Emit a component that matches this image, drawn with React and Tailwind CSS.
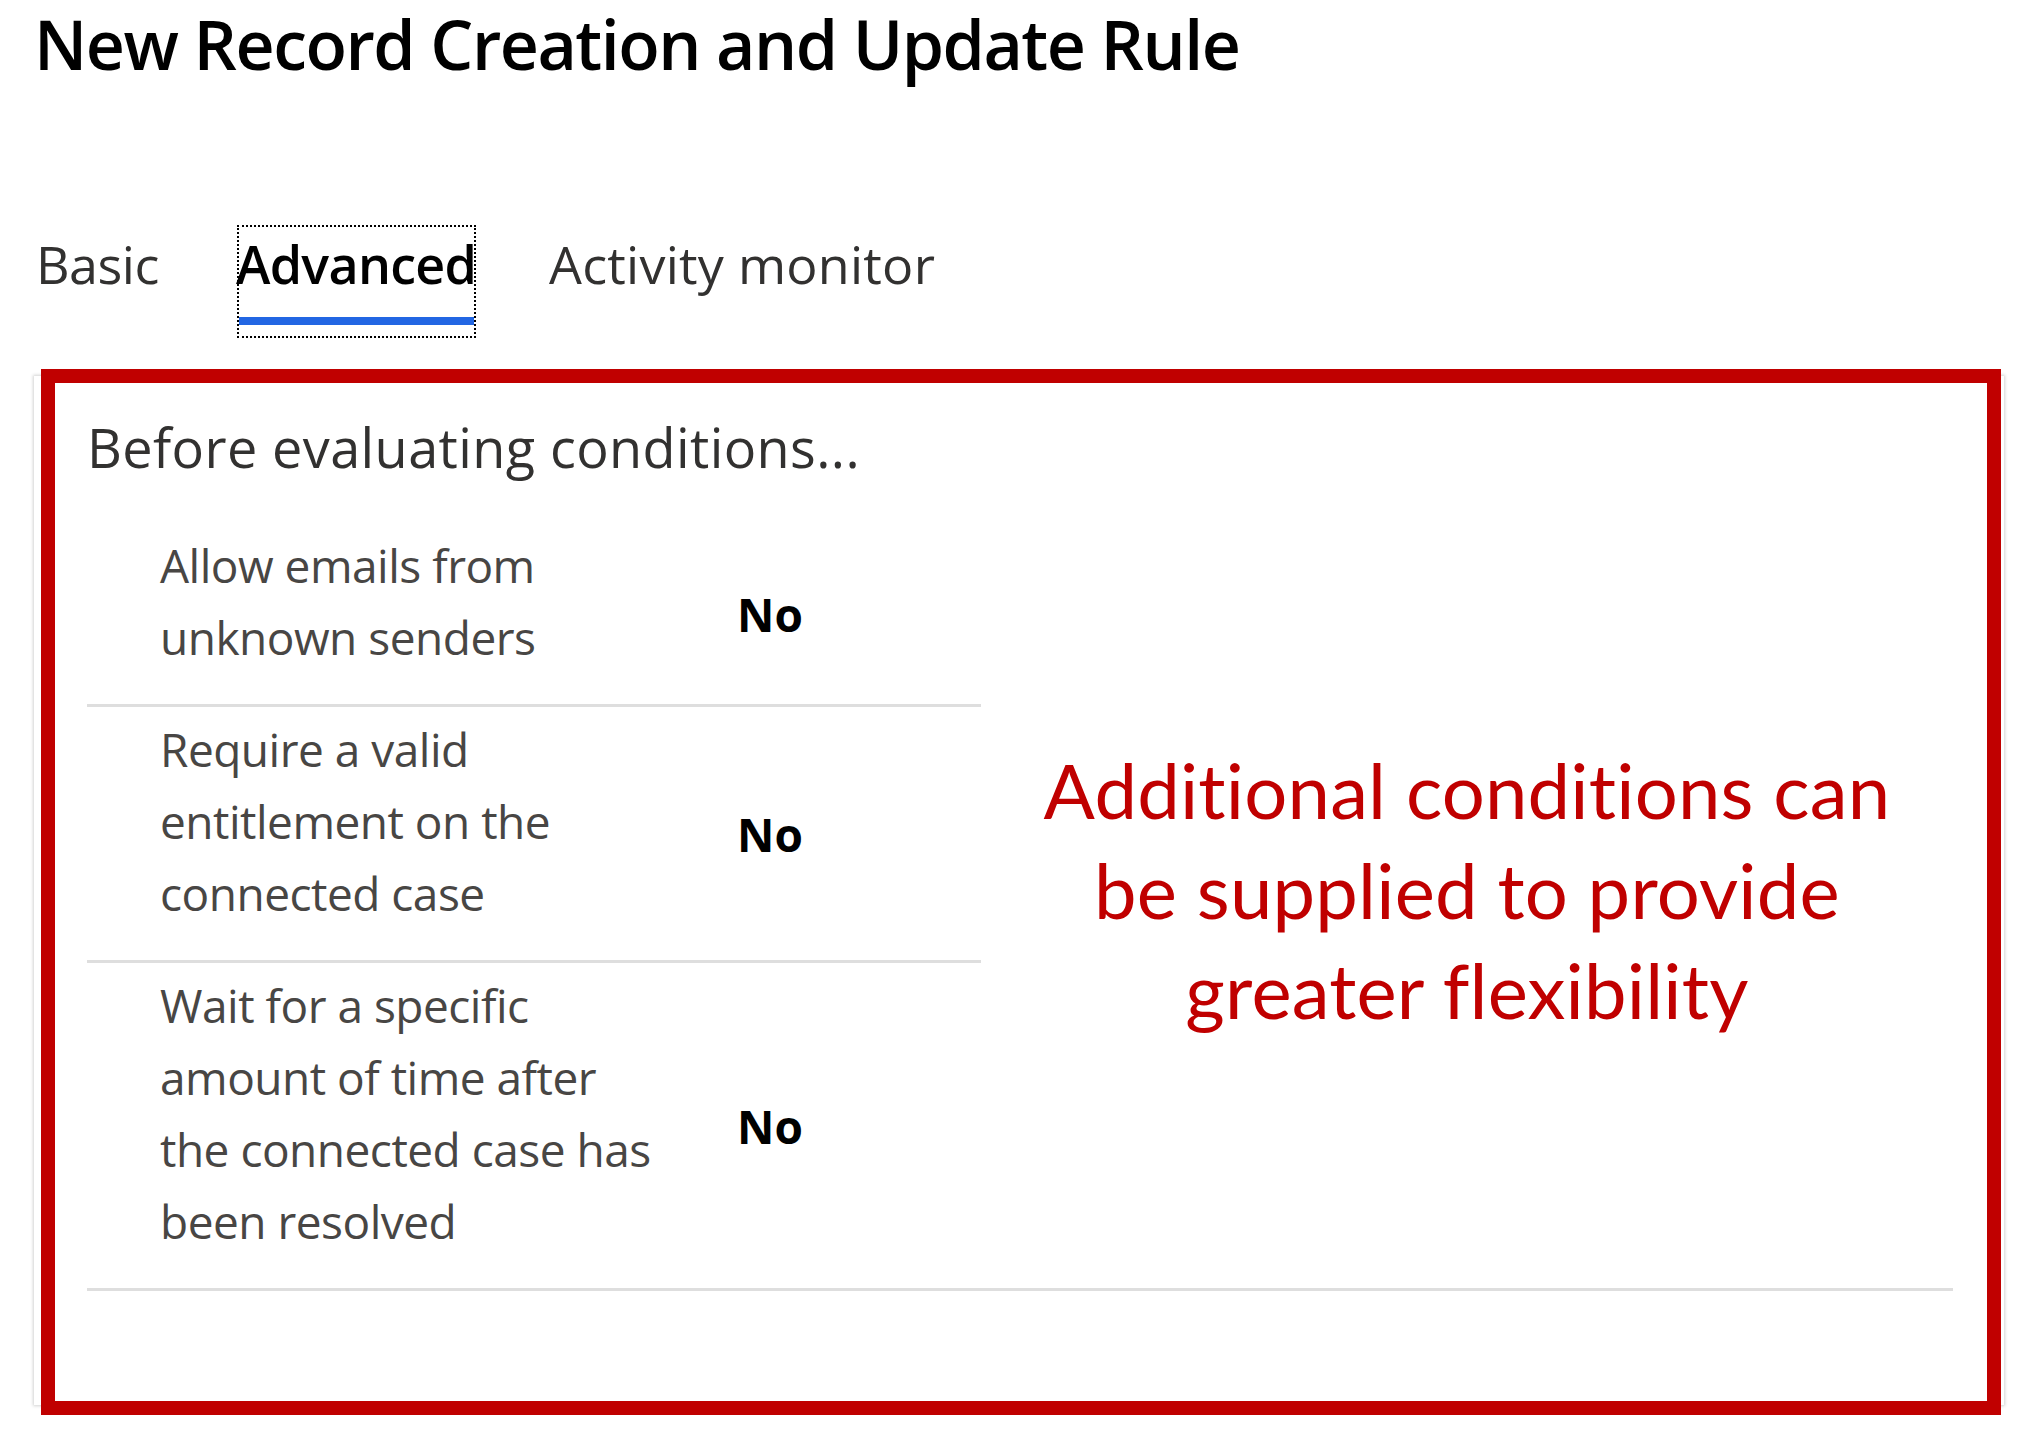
const rows = [
  { label: ["Allow emails from", "unknown senders"], value: "No" },
  { label: ["Require a valid", "entitlement on the", "connected case"], value: "No" },
  { label: ["Wait for a specific", "amount of time after", "the connected case has", "been resolved"], value: "No" },
];

function Row({ label, value, last }) {
  return (
    <div className={`flex items-center ${last ? "" : "border-b-[3px] border-[#dedede]"}`}>
      <div className="w-[652px] pl-[73px] pt-[6px] pb-[31px] text-[46px] leading-[72px] text-[#484644] tracking-[-0.5px]">
        {label.map((l) => (
          <div key={l}>{l}</div>
        ))}
      </div>
      <div className="-ml-[2px] text-[46px] leading-[72px] font-bold text-black">{value}</div>
    </div>
  );
}

export default function App() {
  return (
    <div className="min-h-screen w-full bg-white font-['Open_Sans','Noto_Sans',sans-serif]">
      <h1 className="pl-[34px] pt-[9px] text-[68px] leading-[70px] font-semibold text-black tracking-[-1.5px]">
        New Record Creation and Update Rule
      </h1>

      {/* tabs */}
      <nav className="mt-[146px] flex items-start pl-[36px]">
        <span className="w-[124px] pt-[9px] text-[52px] leading-[60px] text-[#323130] tracking-[-0.5px]">Basic</span>
        <div className="ml-[77px] w-[239px] border-2 border-dotted border-black pt-[7px] pb-[11px]">
          <div className="-ml-[3px] text-[52px] leading-[60px] font-semibold text-black tracking-[-0.7px] whitespace-nowrap">
            Advanced
          </div>
          <div className="mt-[23px] h-[8px] bg-[#2266e3]" />
        </div>
        <span className="ml-[73px] pt-[9px] text-[52px] leading-[60px] text-[#323130] tracking-[0.25px] whitespace-nowrap">
          Activity monitor
        </span>
      </nav>

      {/* card */}
      <section className="relative mt-[38px] ml-[34px] w-[1970px] bg-white shadow-[0_0_3px_1px_rgba(0,0,0,0.18)] pl-[53px] pr-[51px] pt-[44px] pb-[114px]">
        <h2 className="text-[54px] leading-[54px] text-[#323130] tracking-[0.4px]">Before evaluating conditions...</h2>

        <div className="mt-[49px] flex">
          <div className="w-[894px]">
            {rows.map((r, i) => (
              <Row key={i} label={r.label} value={r.value} last={i === rows.length - 1} />
            ))}
          </div>
          <div className="flex-1 flex items-center justify-center pb-[32px]">
            <p className="text-center font-['Lato',sans-serif] text-[76px] leading-[100px] text-[#c00000] tracking-[0.2px]">
              Additional conditions can
              <br />
              be supplied to provide
              <br />
              greater flexibility
            </p>
          </div>
        </div>
        <div className="h-[3px] bg-[#dedede]" />

        {/* annotation frame */}
        <div className="pointer-events-none absolute left-[7px] -top-[7px] right-[3px] -bottom-[10px] border-[14px] border-[#c00000]" />
      </section>
    </div>
  );
}
